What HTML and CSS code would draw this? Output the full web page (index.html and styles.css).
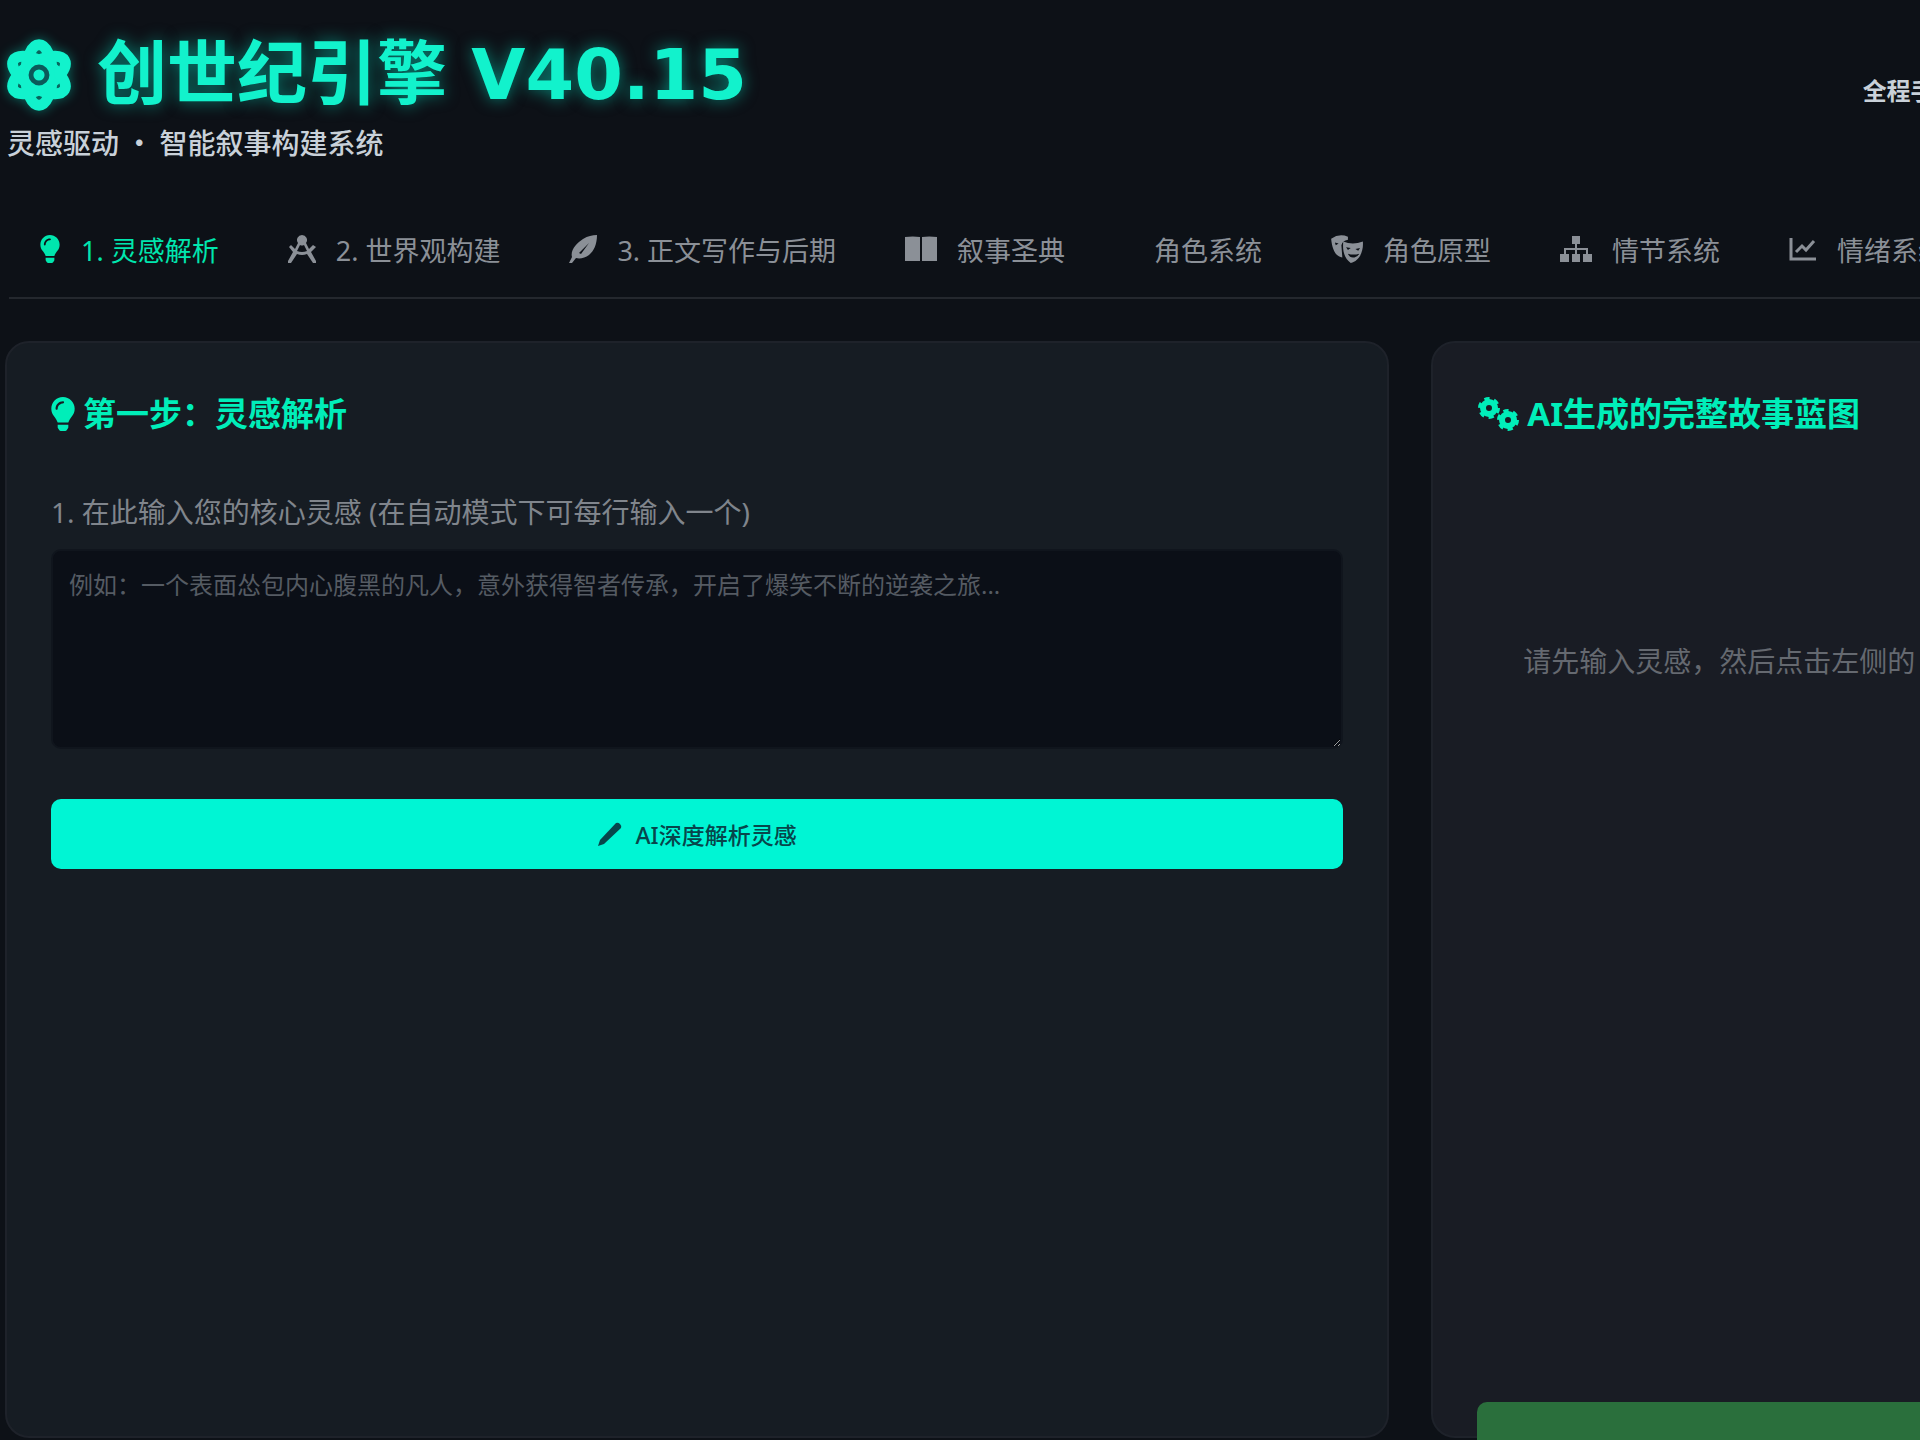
FILE: index.html
```
<!DOCTYPE html>
<html lang="zh-CN">
<head>
  <meta charset="UTF-8" />
  <meta name="viewport" content="width=device-width, initial-scale=1.0" />
  <title>创世纪引擎 V40.15</title>
  <link rel="stylesheet" href="styles.css">
</head>
<body>

<header class="header">
  <div class="brand">
    <h1 class="title">
      <svg class="logo" viewBox="0 0 448 500" aria-hidden="true">
        <g fill="none" stroke="currentColor" stroke-width="76">
          <ellipse cx="224" cy="250" rx="94" ry="212" />
          <ellipse cx="224" cy="250" rx="94" ry="206" transform="rotate(60 224 250)" />
          <ellipse cx="224" cy="250" rx="94" ry="206" transform="rotate(-60 224 250)" />
        </g>
        <circle cx="224" cy="250" r="110" fill="currentColor" />
        <circle cx="224" cy="250" r="56" fill="none" stroke="#0b5a5a" stroke-width="34" />
      </svg>
      <span>创世纪引擎 V40.15</span>
    </h1>
    <p class="subtitle">灵感驱动 · 智能叙事构建系统</p>
  </div>
  <div class="mode">全程手动模式</div>
</header>

<nav class="tabs">
  <button class="tab active" type="button">
    <svg class="icon bulb" viewBox="0 0 352 512" aria-hidden="true"><path d="M96 454c0 6 2 12 5 18l17 26a32 32 0 0 0 27 14h62a32 32 0 0 0 27-14l17-26a32 32 0 0 0 5-18v-38H96zM0 176c0 44 16 85 44 116 16 19 42 58 52 92h160c10-34 36-73 52-92 28-31 44-72 44-116C352 79 273 0 175 0 73 0 0 83 0 176zm176-80c-44 0-80 36-80 80 0 9-7 16-16 16s-16-7-16-16c0-62 50-112 112-112 9 0 16 7 16 16s-7 16-16 16z"/></svg>
    <span>1. 灵感解析</span>
  </button>
  <button class="tab" type="button">
    <svg class="icon" viewBox="0 0 28 28" aria-hidden="true"><path d="M14 0a5 5 0 0 1 4 8l3 6 4-4 3 2-5 5 5 9v2h-3l-6-9a13 13 0 0 1-10 0l-6 9H0v-2l5-9-4-5 2-2 4 4 3-6a5 5 0 0 1 4-8zm-2 10-3 6q5 2 10 0l-3-6q-2 1-4 0z"/></svg>
    <span>2. 世界观构建</span>
  </button>
  <button class="tab" type="button">
    <svg class="icon" viewBox="0 0 28 28" aria-hidden="true"><path d="M28 0c0 9-3 16-8 20-4 3-9 4-13 3l-4 5H0l3-6C1 15 8 8 14 4c5-3 9-4 14-4zM10 18l10-10-8 11z" fill-rule="evenodd"/></svg>
    <span>3. 正文写作与后期</span>
  </button>
  <button class="tab" type="button">
    <svg class="icon wide" viewBox="0 0 32 28" aria-hidden="true"><path d="M0 2q8-1 15 0v24H0zM32 2q-8-1-15 0v24h15z"/></svg>
    <span>叙事圣典</span>
  </button>
  <button class="tab" type="button">
    <span class="no-icon"></span>
    <span>角色系统</span>
  </button>
  <button class="tab" type="button">
    <svg class="icon wide" viewBox="0 0 34 30" aria-hidden="true"><path d="M0 4q9-6 18-2v3q-6 1-7 6l1 13C4 23 1 14 0 4zm4 4 1 3 3-2zM13 7q10 4 21 0c1 11-4 21-13 23-7-5-9-13-8-23zm3 6 2 3 3-2zm10 2 3 2 2-3zm-8 5q2 5 7 4 4-1 5-4-6 2-12 0z" fill-rule="evenodd"/></svg>
    <span>角色原型</span>
  </button>
  <button class="tab" type="button">
    <svg class="icon wide" viewBox="0 0 32 28" aria-hidden="true"><path d="M12 1h8v8h-3v4h11v6h4v8h-9v-8h3v-4h-9v4h3v8h-8v-8h3v-4H6v4h3v8H0v-8h4v-6h11V9h-3z"/></svg>
    <span>情节系统</span>
  </button>
  <button class="tab" type="button">
    <svg class="icon" viewBox="0 0 28 28" aria-hidden="true"><path d="M2 3v21h25M7 17l6-6 4 4 8-9" fill="none" stroke="currentColor" stroke-width="3"/></svg>
    <span>情绪系统</span>
  </button>
</nav>

<main class="panels">
  <section class="panel">
    <h2 class="panel-title">
      <svg class="bulb-lg" viewBox="0 0 352 512" aria-hidden="true"><path d="M96 454c0 6 2 12 5 18l17 26a32 32 0 0 0 27 14h62a32 32 0 0 0 27-14l17-26a32 32 0 0 0 5-18v-38H96zM0 176c0 44 16 85 44 116 16 19 42 58 52 92h160c10-34 36-73 52-92 28-31 44-72 44-116C352 79 273 0 175 0 73 0 0 83 0 176zm176-80c-44 0-80 36-80 80 0 9-7 16-16 16s-16-7-16-16c0-62 50-112 112-112 9 0 16 7 16 16s-7 16-16 16z"/></svg>
      第一步：灵感解析
    </h2>
    <label class="label" for="inspiration">1. 在此输入您的核心灵感 (在自动模式下可每行输入一个)</label>
    <textarea class="input" id="inspiration" placeholder="例如：一个表面怂包内心腹黑的凡人，意外获得智者传承，开启了爆笑不断的逆袭之旅..."></textarea>
    <button class="btn" type="button">
      <svg class="pen" viewBox="0 0 24 24" aria-hidden="true"><path d="M18 1q2-1 4 1t1 4L6 22l-6 2 2-6z"/></svg>
      <span>AI深度解析灵感</span>
    </button>
  </section>

  <section class="panel result">
    <h2 class="panel-title">
      <svg class="cogs" viewBox="0 0 42 36" aria-hidden="true">
        <g fill="none" stroke="currentColor">
          <circle cx="12" cy="12" r="6" stroke-width="6" />
          <circle cx="12" cy="12" r="9" stroke-width="4" stroke-dasharray="5 4.42" />
          <circle cx="31" cy="24" r="6" stroke-width="6" />
          <circle cx="31" cy="24" r="9" stroke-width="4" stroke-dasharray="5 4.42" />
        </g>
      </svg>
      AI生成的完整故事蓝图
    </h2>
    <p class="empty">请先输入灵感，然后点击左侧的</p>
    <button class="btn confirm" type="button" aria-label="确认"></button>
  </section>
</main>

</body>
</html>
```
FILE: styles.css
```
* {
  box-sizing: border-box;
}
body {
  margin: 0;
  height: 100vh;
  display: flex;
  flex-direction: column;
  overflow: hidden;
  background: #0d1117;
  color: #c9d1d9;
  font-family: "Noto Sans", "Noto Sans CJK SC", sans-serif;
}
h1, h2, p {
  margin: 0;
}
button {
  border: none;
  font-family: inherit;
  cursor: pointer;
}
svg {
  flex: none;
  fill: currentColor;
}

.header {
  display: flex;
  padding: 35px 0 0 7px;
}
.brand {
  flex: 1;
}
.title {
  display: flex;
  align-items: center;
  gap: 26px;
  color: #12f2cc;
  font-family: "DejaVu Sans", "Noto Sans CJK SC", sans-serif;
  font-size: 70px;
  line-height: 80px;
  white-space: nowrap;
  text-shadow: 0 0 16px rgba(0, 245, 212, 0.5);
}
.logo {
  width: 64px;
  height: 72px;
  filter: drop-shadow(0 0 6px rgba(0, 245, 212, 0.4));
}
.subtitle {
  font-family: "Noto Sans CJK SC", sans-serif;
  font-size: 28px;
  font-weight: 500;
  line-height: 54px;
}
.mode {
  flex: 0 0 3%;
  min-width: 0;
  padding-top: 38px;
  overflow: hidden;
  font-size: 24px;
  font-weight: bold;
  line-height: 36px;
  white-space: nowrap;
}

.tabs {
  display: flex;
  gap: 9px;
  margin-left: 9px;
  margin-top: 26px;
  height: 104px;
  border-bottom: 2px solid #24282e;
  overflow: hidden;
}
.tab {
  flex: none;
  display: flex;
  align-items: center;
  gap: 20px;
  padding: 6px 30px 0;
  background: none;
  color: #8b9097;
  font-size: 27px;
  white-space: nowrap;
}
.tab.active {
  color: #00e6ae;
}
.icon {
  width: 28px;
  height: 28px;
}
.icon.bulb {
  width: 22px;
}
.icon.wide {
  width: 32px;
}
.no-icon {
  width: 0;
}

.panels {
  flex: 1;
  display: grid;
  grid-template-columns: 72.1vw 72.1vw;
  gap: 42px;
  padding: 42px 0 2px 5px;
  overflow: hidden;
}
.panel {
  display: flex;
  flex-direction: column;
  padding: 44px;
  background: #161c23;
  border: 2px solid #1e222a;
  border-radius: 24px;
}
.result {
  background: #191c24;
}
.panel-title {
  display: flex;
  align-items: center;
  gap: 8px;
  color: #00eeb9;
  font-size: 33px;
  line-height: 54px;
  white-space: nowrap;
}
.bulb-lg {
  width: 24px;
  height: 34px;
}
.cogs {
  width: 42px;
  height: 36px;
}
.label {
  margin-top: 49px;
  color: #80858c;
  font-size: 28px;
  line-height: 44px;
}
.input {
  height: 200px;
  margin-top: 15px;
  padding: 16px;
  background: #0b0f17;
  border: 2px solid #10151d;
  border-radius: 10px;
  color: #c9d1d9;
  font-family: inherit;
  font-size: 24px;
  line-height: 36px;
  resize: vertical;
}
.input::placeholder {
  color: #555b63;
}
.btn {
  flex: none;
  display: flex;
  align-items: center;
  justify-content: center;
  gap: 14px;
  height: 70px;
  margin-top: 50px;
  background: #00f5d4;
  border-radius: 10px;
  color: #07464b;
  font-size: 23px;
  font-weight: 500;
}
.pen {
  width: 24px;
  height: 24px;
}
.empty {
  margin: 198px 0 auto 46px;
  color: #656970;
  font-size: 28px;
  line-height: 44px;
  white-space: nowrap;
}
/* runs past the bottom of the panel */
.confirm {
  margin-bottom: -80px;
  background: #2a6f3c;
}
```
